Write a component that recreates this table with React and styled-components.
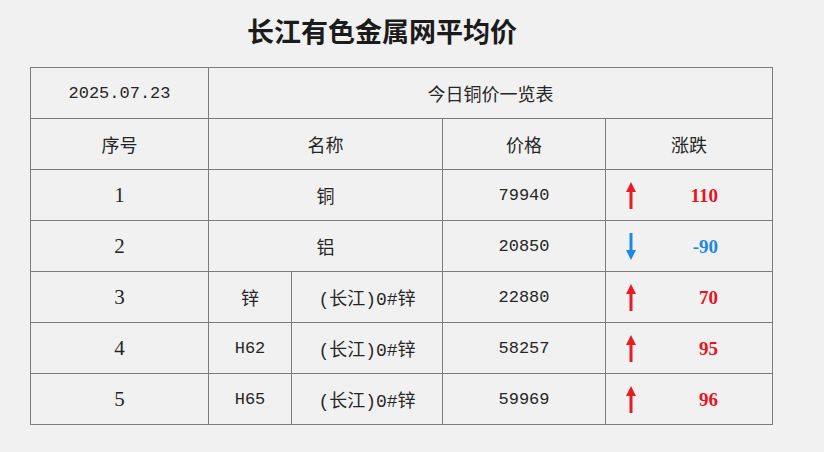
import React from "react";
import styled, { createGlobalStyle } from "styled-components";

const GlobalStyle = createGlobalStyle`
  html, body {
    margin: 0;
    padding: 0;
    background: #f1f1f1;
  }
  body {
    font-family: "Noto Sans CJK SC", sans-serif;
    color: #222;
  }
`;

const rows = [
  { no: 1, name: "铜", price: "79940", change: 110 },
  { no: 2, name: "铝", price: "20850", change: -90 },
  { no: 3, grade: "锌", name: "(长江)0#锌", price: "22880", change: 70 },
  { no: 4, grade: "H62", name: "(长江)0#锌", price: "58257", change: 95 },
  { no: 5, grade: "H65", name: "(长江)0#锌", price: "59969", change: 96 },
];

const UpArrow = ({ color }) => (
  <svg width="10" height="27" viewBox="0 0 10 27">
    <path d="M5 0 L10 10 L6.5 10 L6.5 27 L3.5 27 L3.5 10 L0 10 Z" fill={color} />
  </svg>
);

const DownArrow = ({ color }) => (
  <svg width="10" height="27" viewBox="0 0 10 27">
    <path d="M5 27 L10 17 L6.5 17 L6.5 0 L3.5 0 L3.5 17 L0 17 Z" fill={color} />
  </svg>
);

const App = () => (
  <>
    <GlobalStyle />
    <Page>
      <Title>长江有色金属网平均价</Title>
      <PriceTable>
        <colgroup>
          <col style={{ width: 178 }} />
          <col style={{ width: 83 }} />
          <col style={{ width: 151 }} />
          <col style={{ width: 163 }} />
          <col style={{ width: 167 }} />
        </colgroup>
        <tbody>
          <tr>
            <Cell $latin>2025.07.23</Cell>
            <Cell colSpan={4}>今日铜价一览表</Cell>
          </tr>
          <tr>
            <Cell>序号</Cell>
            <Cell colSpan={2}>名称</Cell>
            <Cell>价格</Cell>
            <Cell>涨跌</Cell>
          </tr>
          {rows.map((r) => (
            <tr key={r.no}>
              <NumCell>{r.no}</NumCell>
              {r.grade ? (
                <>
                  <Cell $latin={r.grade !== "锌"}>{r.grade}</Cell>
                  <Cell $mixed>{r.name}</Cell>
                </>
              ) : (
                <Cell colSpan={2}>{r.name}</Cell>
              )}
              <Cell $latin>{r.price}</Cell>
              <Cell>
                <Change>
                  {r.change > 0 ? <UpArrow color="#ec1b23" /> : <DownArrow color="#1e88e5" />}
                  <ChangeValue $up={r.change > 0}>{r.change}</ChangeValue>
                </Change>
              </Cell>
            </tr>
          ))}
        </tbody>
      </PriceTable>
    </Page>
  </>
);

export default App;

const Page = styled.div`
  padding-left: 30px;
  width: 743px;
`;

const Title = styled.h1`
  margin: 0 0 5px;
  padding-right: 39px;
  height: 62px;
  line-height: 62px;
  text-align: center;
  font-family: "Noto Sans CJK SC", serif;
  font-size: 27px;
  font-weight: 700;
  color: #1b1b1b;
`;

const PriceTable = styled.table`
  border-collapse: collapse;
  table-layout: fixed;
  width: 743px;

  tr {
    height: 51px;
  }
`;

const Cell = styled.td`
  border: 1px solid #7c7c7c;
  padding: 0;
  text-align: center;
  vertical-align: middle;
  font-family: ${(p) =>
    p.$latin || p.$mixed
      ? `"Liberation Mono", "Noto Sans CJK SC", monospace`
      : `"Noto Sans CJK SC", sans-serif`};
  font-size: ${(p) => (p.$latin ? "17px" : "18px")};
  color: #262626;
`;

const NumCell = styled(Cell)`
  font-family: "Liberation Serif", serif;
  font-size: 21px;
`;

const Change = styled.div`
  display: flex;
  align-items: center;
  justify-content: space-between;
  padding: 0 54px 0 20px;
  line-height: 1;
`;

const ChangeValue = styled.span`
  font-family: "Liberation Serif", serif;
  font-weight: 700;
  font-size: 19px;
  color: ${(p) => (p.$up ? "#e5141f" : "#1e88e5")};
`;
